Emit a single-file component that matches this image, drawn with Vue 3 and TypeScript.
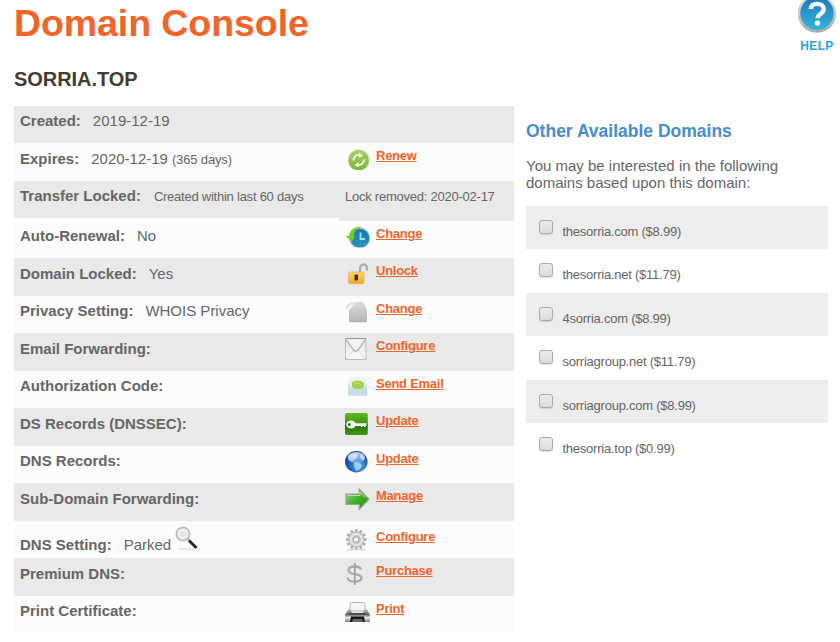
<script setup lang="ts">
type IconName =
  | 'renew' | 'clock' | 'unlock' | 'tag' | 'envelope' | 'mail'
  | 'key' | 'globe' | 'arrow' | 'gear' | 'dollar' | 'printer'

interface Row {
  label: string
  value?: string
  note?: string
  text?: string
  icon?: IconName
  link?: string
  size: string
  magnifier?: boolean
}

interface Suggestion {
  name: string
  price: string
}

const rows: Row[] = [
  { label: 'Created:', value: '2019-12-19', size: 'short' },
  { label: 'Expires:', value: '2020-12-19', note: '(365 days)', icon: 'renew', link: 'Renew', size: 'tall' },
  { label: 'Transfer Locked:', note: 'Created within last 60 days', text: 'Lock removed: 2020-02-17', size: 'split' },
  { label: 'Auto-Renewal:', value: 'No', icon: 'clock', link: 'Change', size: 'short' },
  { label: 'Domain Locked:', value: 'Yes', icon: 'unlock', link: 'Unlock', size: 'tall' },
  { label: 'Privacy Setting:', value: 'WHOIS Privacy', icon: 'tag', link: 'Change', size: 'short' },
  { label: 'Email Forwarding:', icon: 'envelope', link: 'Configure', size: 'tall' },
  { label: 'Authorization Code:', icon: 'mail', link: 'Send Email', size: 'short' },
  { label: 'DS Records (DNSSEC):', icon: 'key', link: 'Update', size: 'tall' },
  { label: 'DNS Records:', icon: 'globe', link: 'Update', size: 'short' },
  { label: 'Sub-Domain Forwarding:', icon: 'arrow', link: 'Manage', size: 'tall' },
  { label: 'DNS Setting:', value: 'Parked', icon: 'gear', link: 'Configure', size: 'short low', magnifier: true },
  { label: 'Premium DNS:', icon: 'dollar', link: 'Purchase', size: 'tall' },
  { label: 'Print Certificate:', icon: 'printer', link: 'Print', size: 'short' },
]

const suggestions: Suggestion[] = [
  { name: 'thesorria.com', price: '$8.99' },
  { name: 'thesorria.net', price: '$11.79' },
  { name: '4sorria.com', price: '$8.99' },
  { name: 'sorriagroup.net', price: '$11.79' },
  { name: 'sorriagroup.com', price: '$8.99' },
  { name: 'thesorria.top', price: '$0.99' },
]
const gearAngles: number[] = Array.from({ length: 12 }, (_, i) => i * 30)
</script>

<template>
  <div class="page">
    <header class="top">
      <div>
        <h1>Domain Console</h1>
        <h2>SORRIA.TOP</h2>
      </div>
      <a class="help">
        <svg width="40" height="34" viewBox="0 0 40 34">
          <defs>
            <linearGradient id="helpFill" x1="0" y1="0" x2="0" y2="1">
              <stop offset="0" stop-color="#1c79b4" />
              <stop offset="1" stop-color="#35b5e0" />
            </linearGradient>
            <linearGradient id="helpRim" x1="0" y1="0" x2="0" y2="1">
              <stop offset="0" stop-color="#e4e4e4" />
              <stop offset="1" stop-color="#a9adb0" />
            </linearGradient>
          </defs>
          <circle cx="20" cy="13.5" r="19.3" fill="url(#helpRim)" />
          <circle cx="20" cy="13.2" r="16.7" fill="url(#helpFill)" />
          <path d="M13.800 9.200c.2-3.700 2.800-5.300 6.400-5.300 3.900 0 6.500 2 6.500 5.200 0 2.500-1.300 3.700-3.200 5-2.200 1.300-2.900 2-2.900 4.200" fill="none" stroke="#f4f4f4" stroke-width="4.400" />
          <circle cx="20.5" cy="23" r="2.700" fill="#f4f4f4" />
        </svg>
        <span>HELP</span>
      </a>
    </header>

    <main class="content">
      <section class="console">
        <div v-for="(row, i) in rows" :key="row.label" class="row" :class="[row.size, { shaded: i % 2 === 0 }]">
          <div class="info">
            <strong>{{ row.label }}</strong>
            <span v-if="row.value" class="value">{{ row.value }}</span>
            <small v-if="row.note" :class="{ after: row.value }">{{ row.note }}</small>
            <svg v-if="row.magnifier" class="magnifier" width="24" height="26" viewBox="0 0 24 26">
              <defs>
                <radialGradient id="lens"><stop offset="0" stop-color="#e0e0e0" /><stop offset="1" stop-color="#f4f4f4" /></radialGradient>
              </defs>
              <ellipse cx="11" cy="23" rx="9" ry="1.3" fill="#e8e8e8" />
              <circle cx="8" cy="8" r="6.600" fill="url(#lens)" stroke="#bdbdbd" stroke-width="1.700" />
              <path d="m12.500 12.500 3 3" stroke="#aaa" stroke-width="2" />
              <path d="m14 14.500 7.500 7.500" stroke="#292929" stroke-width="3" />
            </svg>
          </div>
          <div class="action">
            <span v-if="row.text" class="plain">{{ row.text }}</span>
            <svg v-if="row.icon" class="icon" width="26" height="24" viewBox="0 0 26 24">
              <template v-if="row.icon === 'renew'">
                <defs>
                  <linearGradient id="renewFill" x1="0" y1="0" x2="0" y2="1"><stop offset="0" stop-color="#a5d063" /><stop offset="1" stop-color="#78b833" /></linearGradient>
                  <clipPath id="renewClip"><rect width="26" height="22" /></clipPath>
                </defs>
                <g clip-path="url(#renewClip)">
                  <circle cx="13.700" cy="12.200" r="10.900" fill="#d9dfd2" />
                  <circle cx="13.700" cy="12.200" r="10.200" fill="url(#renewFill)" />
                  <path d="M8.500 12.500c0-4 2.800-5.800 6-5.500M19 11.500c0 4-2.800 5.800-6 5.500" fill="none" stroke="#f1fae4" stroke-width="1.800" />
                  <path d="m14 4.500 4 3-4 2.700zM13.500 14l-4 2.900 4 2.700z" fill="#f1fae4" />
                </g>
              </template>
              <template v-else-if="row.icon === 'clock'">
                <defs>
                  <linearGradient id="clockFill" x1="0" y1="0" x2="0" y2="1"><stop offset="0" stop-color="#1977ae" /><stop offset="1" stop-color="#2496be" /></linearGradient>
                  <clipPath id="clockClip"><rect width="26" height="21.500" /></clipPath>
                </defs>
                <g clip-path="url(#clockClip)">
                  <circle cx="14.600" cy="12" r="10.700" fill="#c6cbd0" />
                  <circle cx="14.800" cy="12.200" r="9.500" fill="url(#clockFill)" />
                  <path d="M15.500 6.500v6.500h4.500" fill="none" stroke="#a9daf1" stroke-width="1.800" />
                  <path d="M17 .8C10-.2 5 3.500 4 10L.5 10l6.500 6 3-6.500H8.500C9.500 5 12 2.500 17 .8z" fill="#76ca2d" />
                </g>
              </template>
              <template v-else-if="row.icon === 'unlock'">
                <defs><linearGradient id="lockFill" x1="0" y1="0" x2="0" y2="1"><stop offset="0" stop-color="#ffd66a" /><stop offset="1" stop-color="#f0a82c" /></linearGradient></defs>
                <path d="M15 9V6.500C14.500-.3 22.500 0 22 6v1.500" fill="none" stroke="#acacac" stroke-width="2.200" />
                <rect x="3.500" y="9" width="15.500" height="11.800" rx="1.800" fill="url(#lockFill)" stroke="#e3a745" stroke-width=".6" />
                <rect x="9.500" y="11.500" width="3.500" height="6" rx="1" fill="#39331f" />
              </template>
              <template v-else-if="row.icon === 'tag'">
                <defs><linearGradient id="tagFill" x1="0" y1="0" x2="0" y2="1"><stop offset="0" stop-color="#dcdcdc" /><stop offset="1" stop-color="#b3b3b5" /></linearGradient></defs>
                <path d="M2 8c0-5 7-7.500 10-3.500" fill="none" stroke="#e2e2e2" stroke-width="2.500" />
                <path d="m4 9 5-5.800Q10.500.5 14.500.8 18.500.5 19.500 3.500L22 8.500V21.300H4z" fill="url(#tagFill)" />
                <path d="m4 9 5-5.800" stroke="#eee" />
              </template>
              <template v-else-if="row.icon === 'envelope'">
                <defs><linearGradient id="envFill" x1="0" y1="0" x2="0" y2="1"><stop offset="0" stop-color="#e3e3e3" /><stop offset="1" stop-color="#fafafa" /></linearGradient></defs>
                <rect x=".5" y=".5" width="20.500" height="21" fill="url(#envFill)" stroke="#bbb" />
                <path d="M.5.500H21" stroke="#999" />
                <path d="m1 21 7.500-9M20.500 21 13 12" stroke="#dcdcdc" />
                <path d="m1 1.500 7.500 10.500q2.200 2.500 4.500 0L20.500 1.500" fill="#f1f1f1" stroke="#aaa" stroke-width="1.200" />
              </template>
              <template v-else-if="row.icon === 'mail'">
                <defs><linearGradient id="mailFill" x1="0" y1="0" x2="0" y2="1"><stop offset="0" stop-color="#e3eef3" /><stop offset="1" stop-color="#bcd5e0" /></linearGradient></defs>
                <path d="M3 7 6 1.500 20 1l2.200 6v12.500H3z" fill="url(#mailFill)" />
                <path d="m3 7 9.500 7.500L22 7V1.500H5z" fill="#edf5f7" />
                <path d="M6.500 6.500Q12.500 2.500 19 6.500L18.500 11.500Q13 15.500 7.500 11.500z" fill="#a5d246" />
                <path d="M9.500 8q3.500-2.500 6.500 1" fill="none" stroke="#c9e873" />
                <path d="m3 19.500 8-6q1.700-1.300 3.300 0l8 6z" fill="#ccdfe7" />
              </template>
              <template v-else-if="row.icon === 'key'">
                <defs><linearGradient id="keyFill" x1="0" y1="0" x2="0" y2="1"><stop offset="0" stop-color="#5fba1e" /><stop offset=".48" stop-color="#3d970f" /><stop offset=".52" stop-color="#246f05" /><stop offset="1" stop-color="#419914" /></linearGradient></defs>
                <rect width="22.800" height="22" rx="1.800" fill="url(#keyFill)" />
                <ellipse cx="6" cy="11.500" rx="4.800" ry="4" fill="#f2f4e9" />
                <circle cx="4.300" cy="11.500" r="1.500" fill="#2f7d0a" />
                <path d="M10 10.200h11.500v2.800h-1v1h-1.500v-1h-1.500v1h-1.500v-1H10z" fill="#f2f4e9" />
              </template>
              <template v-else-if="row.icon === 'globe'">
                <defs>
                  <radialGradient id="globeFill" cx=".6" cy=".7" r=".7"><stop offset="0" stop-color="#5bb8ec" /><stop offset=".5" stop-color="#2669ca" /><stop offset="1" stop-color="#153884" /></radialGradient>
                  <linearGradient id="globeGloss" x1="0" y1="0" x2="0" y2="1"><stop offset="0" stop-color="#fff" stop-opacity=".75" /><stop offset="1" stop-color="#fff" stop-opacity=".15" /></linearGradient>
                </defs>
                <ellipse cx="11.300" cy="10.700" rx="11.300" ry="10.700" fill="url(#globeFill)" />
                <path d="m4 4 7-2 2 3-3 4-3 2-4-3zM9 11l6 1 2 3-3 4-3 1-2-5zM16 3l4 4-2 3-3-4z" fill="#b9dcf4" opacity=".75" />
                <ellipse cx="11.300" cy="6.500" rx="8.800" ry="5.500" fill="url(#globeGloss)" />
              </template>
              <template v-else-if="row.icon === 'arrow'">
                <defs><linearGradient id="arrowFill" x1="0" y1="0" x2="1" y2="1"><stop offset="0" stop-color="#a2d890" /><stop offset=".45" stop-color="#4bb230" /><stop offset="1" stop-color="#238c0c" /></linearGradient></defs>
                <path d="M1 6h13.300V1.300L24 11.200l-9.700 10V16.500H1z" fill="url(#arrowFill)" stroke="#92a58e" stroke-width="1.200" />
                <path d="M2 7.500h13V4l5 5.500" fill="none" stroke="#b2e29f" />
              </template>
              <template v-else-if="row.icon === 'gear'">
                <g fill="#b5b5b5">
                  <rect v-for="angle in gearAngles" :key="angle" x="9.800" y="0" width="3" height="4.500" rx=".7" :transform="`rotate(${angle} 11.300 10.500)`" />
                </g>
                <circle cx="11.300" cy="10.500" r="7.500" fill="#dedede" stroke="#b8b8b8" />
                <circle cx="11.300" cy="10.500" r="5.300" fill="#cecece" stroke="#ededed" />
                <circle cx="11.300" cy="10.500" r="2.800" fill="#fafafa" stroke="#a5a5a5" stroke-width="1.100" />
                <path d="M2 20.800h18.500" stroke="#cfcfcf" />
              </template>
              <template v-else-if="row.icon === 'dollar'">
                <path d="M16 6.500C15 2.500 3.500 2.300 3.500 7.200c0 5.200 13 2.500 13 7.700 0 5.300-13.500 5-14-.4" fill="none" stroke="#a9a9a9" stroke-width="2.300" />
                <path d="M9.800 0v22" stroke="#a2a2a2" stroke-width="1.800" />
              </template>
              <template v-else>
                <defs><linearGradient id="printFill" x1="0" y1="0" x2="0" y2="1"><stop offset="0" stop-color="#bbb" /><stop offset=".4" stop-color="#606060" /><stop offset=".65" stop-color="#eee" /><stop offset="1" stop-color="#777" /></linearGradient></defs>
                <path d="M5 10V3Q5 1.500 6.500 1.500h12Q20 1.500 20 3v7z" fill="#f5f5f5" stroke="#b7b7b7" />
                <path d="M3 8.500h3l1 4h11l1-4h3L25 14v7H0v-7z" fill="url(#printFill)" />
                <path d="M7 9h11v2.500H7z" fill="#d5d5d5" />
                <path d="M5 12h15v1.500H5z" fill="#444" />
                <path d="m6 15.500-1 5.500h15l-1-5.500z" fill="#161616" />
                <path d="m8 18-1 3h11l-1-3z" fill="#666" />
              </template>
            </svg>
            <a v-if="row.link" class="link">{{ row.link }}</a>
          </div>
        </div>
      </section>

      <aside class="others">
        <h3>Other Available Domains</h3>
        <p>You may be interested in the following<br />domains based upon this domain:</p>
        <ul>
          <li v-for="item in suggestions" :key="item.name">
            <label>
              <input type="checkbox" />
              <span>{{ item.name }} ({{ item.price }})</span>
            </label>
          </li>
        </ul>
      </aside>
    </main>
  </div>
</template>

<style>
body {
  background: #fff;
}
</style>

<style scoped>
.page {
  box-sizing: border-box;
  width: 840px;
  height: 642px;
  overflow: hidden;
  padding-left: 14px;
  font-family: "Liberation Sans", Arial, sans-serif;
  font-size: 15px;
  line-height: 17px;
  color: #666;
}
.top {
  display: flex;
  justify-content: space-between;
  height: 106px;
}
h1 {
  margin: 0;
  padding-top: 2px;
  font-size: 37.5px;
  line-height: 43px;
  letter-spacing: -0.08px;
  color: #f1652b;
}
h2 {
  margin: 22px 0 0;
  font-size: 20px;
  line-height: 24px;
  letter-spacing: -0.05px;
  color: #433c32;
}
.help {
  display: flex;
  flex-direction: column;
  align-items: center;
  width: 40px;
  margin-right: 3px;
  color: #2fa4db;
  font-size: 12px;
  font-weight: bold;
  letter-spacing: 0.35px;
}
.help svg {
  display: block;
}
.help span {
  margin-top: 4px;
}
.content {
  display: flex;
  gap: 12px;
}
.console {
  width: 500px;
}
.row {
  display: grid;
  grid-template-columns: 325px 175px;
}
.short {
  height: 37px;
}
.tall {
  height: 38px;
}
.split {
  height: 40px;
}
.info,
.action {
  box-sizing: border-box;
  display: flex;
  align-items: flex-start;
  background: #fcfcfc;
  white-space: nowrap;
}
.shaded .info,
.shaded .action {
  background: #e9e9e9;
}
.info {
  padding: 6px 0 0 6px;
}
.tall .info {
  padding-top: 7px;
}
.split .info {
  height: 37px;
}
.low .info {
  padding-top: 15px;
}
.value {
  margin-left: 12px;
}
small,
.plain {
  margin-left: 13px;
  font-size: 13px;
  letter-spacing: -0.24px;
}
small {
  padding-top: 1px;
}
small.after {
  margin-left: 4px;
  letter-spacing: -0.15px;
}
.magnifier {
  margin: -10px 0 -10px 4px;
}
.action {
  padding: 5px 0 0 6px;
}
.tall .icon {
  margin-top: 0;
}
.split .action {
  padding-top: 7px;
}
.plain {
  margin-left: 0;
}
.icon {
  flex: none;
}
.link {
  margin: -1px 0 0 5px;
  font-size: 13px;
  font-weight: bold;
  letter-spacing: -0.25px;
  color: #f1652b;
  text-decoration: underline;
}
.low .action {
  padding-top: 8px;
}
.others {
  width: 302px;
  padding-top: 14px;
}
h3 {
  margin: 0;
  font-size: 17.5px;
  line-height: 22px;
  color: #468dd0;
}
p {
  margin: 15px 0 0;
}
ul {
  margin: 15px 0 0;
  padding: 0;
  list-style: none;
}
li {
  height: 44px;
}
li:nth-child(odd) {
  height: 43px;
}
label {
  box-sizing: border-box;
  display: flex;
  height: 43px;
  padding: 14px 0 0 13px;
  font-size: 13px;
  letter-spacing: -0.24px;
}
li:nth-child(odd) label {
  background: #ededed;
}
input {
  appearance: none;
  box-sizing: border-box;
  width: 14px;
  height: 14px;
  margin: 0 9.500px 0 0;
  border: 1px solid #aaa;
  border-radius: 3px;
  background: linear-gradient(#ececec, #dcdcdc);
  box-shadow: 0 1px 1px #00000020;
}
label span {
  padding-top: 3px;
}
</style>
